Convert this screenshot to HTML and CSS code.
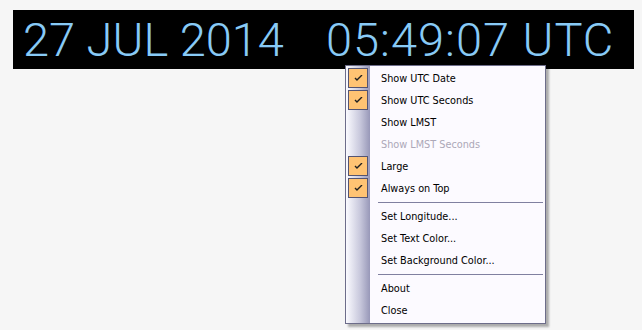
FILE: index.html
```html
<!DOCTYPE html>
<html lang="en">
<head>
    <meta charset="UTF-8">
    <title>UTC Clock</title>
    <link rel="stylesheet" href="styles.css">
</head>
<body>

<!-- clock display -->
<div class="clock">
    <span class="date">27 JUL 2014</span>
    <span class="time">05:49:07 UTC</span>
</div>

<!-- right-click context menu -->
<div class="menu">
    <div class="item checked"><span class="check"><svg width="9" height="7" viewBox="0 0 9 7"><path d="M1 3 L3 5 L8 0" fill="none" stroke="#202020" stroke-width="1.4"/></svg></span>Show UTC Date</div>
    <div class="item checked"><span class="check"><svg width="9" height="7" viewBox="0 0 9 7"><path d="M1 3 L3 5 L8 0" fill="none" stroke="#202020" stroke-width="1.4"/></svg></span>Show UTC Seconds</div>
    <div class="item"><span class="check"></span>Show LMST</div>
    <div class="item disabled"><span class="check"></span>Show LMST Seconds</div>
    <div class="item checked"><span class="check"><svg width="9" height="7" viewBox="0 0 9 7"><path d="M1 3 L3 5 L8 0" fill="none" stroke="#202020" stroke-width="1.4"/></svg></span>Large</div>
    <div class="item checked"><span class="check"><svg width="9" height="7" viewBox="0 0 9 7"><path d="M1 3 L3 5 L8 0" fill="none" stroke="#202020" stroke-width="1.4"/></svg></span>Always on Top</div>
    <div class="separator"></div>
    <div class="item"><span class="check"></span>Set Longitude...</div>
    <div class="item"><span class="check"></span>Set Text Color...</div>
    <div class="item"><span class="check"></span>Set Background Color...</div>
    <div class="separator"></div>
    <div class="item"><span class="check"></span>About</div>
    <div class="item"><span class="check"></span>Close</div>
</div>

</body>
</html>
```

FILE: styles.css
```css
body {
    margin: 0;
    padding: 10px 8px 0 13px;
    background-color: #f6f6f6;
    position: relative;
    height: 320px;
    overflow: hidden;
}

.clock {
    width: 621px;
    height: 59px;
    background-color: #000;
    color: #88caf6;
    font-family: 'Roboto', sans-serif;
    font-weight: 300;
    font-size: 47px;
    line-height: 59px;
    display: flex;
    gap: 42px;
    padding-left: 10px;
    box-sizing: border-box;
    white-space: nowrap;
}

.time {
    letter-spacing: 1px;
}

.menu {
    position: absolute;
    left: 345px;
    top: 65px;
    width: 199px;
    padding: 1px 0 2px;
    background-color: #fcfaff;
    border: 1px solid #6d6d8a;
    box-shadow: 3px 3px 2px rgba(0, 0, 0, 0.3);
    background-image: linear-gradient(to right, #fbfbff 0px, #c8c8dc 14px, #9898b8 24px, transparent 24px);
    font-family: 'DejaVu Sans Condensed', 'DejaVu Sans', sans-serif;
    font-size: 10.8px;
    color: #000;
}

.item {
    height: 22px;
    display: flex;
    align-items: center;
}

.check {
    width: 20px;
    height: 20px;
    margin: 0 13px 0 2px;
    box-sizing: border-box;
    display: flex;
    align-items: center;
    justify-content: center;
}

.checked .check {
    background-color: #ffc373;
    border: 1px solid #545472;
}

.disabled {
    color: #aca8b8;
}

.separator {
    height: 6px;
    display: flex;
    align-items: center;
}

.separator::before {
    content: '';
    display: block;
    height: 1px;
    background-color: #8080a0;
    margin-left: 32px;
    margin-right: 2px;
    flex: 1;
}
```
